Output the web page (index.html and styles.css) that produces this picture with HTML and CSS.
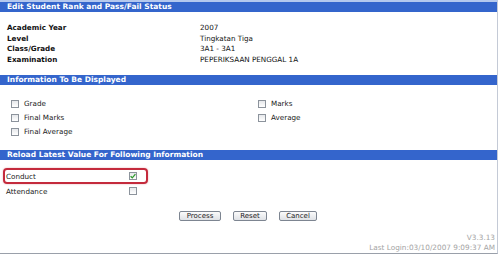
FILE: index.html
```html
<!DOCTYPE html>
<html lang="en">

<head>
  <meta charset="UTF-8" />
  <title>Edit Student Rank and Pass/Fail Status</title>
  <link rel="stylesheet" href="styles.css">
</head>

<body>
  <div class="panel">
    <div class="section-head">Edit Student Rank and Pass/Fail Status</div>
    <div class="info-list">
      <div class="info-row"><span class="info-label">Academic Year</span><span>2007</span></div>
      <div class="info-row"><span class="info-label">Level</span><span>Tingkatan Tiga</span></div>
      <div class="info-row"><span class="info-label">Class/Grade</span><span>3A1 - 3A1</span></div>
      <div class="info-row"><span class="info-label">Examination</span><span>PEPERIKSAAN PENGGAL 1A</span></div>
    </div>

    <div class="section-head">Information To Be Displayed</div>
    <div class="option-grid">
      <label class="option"><span class="check"></span>Grade</label>
      <label class="option"><span class="check"></span>Marks</label>
      <label class="option"><span class="check"></span>Final Marks</label>
      <label class="option"><span class="check"></span>Average</label>
      <label class="option"><span class="check"></span>Final Average</label>
    </div>

    <div class="section-head">Reload Latest Value For Following Information</div>
    <div class="reload-list">
      <!-- highlighted row -->
      <div class="reload-row highlight">
        <span class="reload-label">Conduct</span>
        <span class="check checked">
          <svg viewBox="0 0 8 8" width="8" height="8"><path d="M1.6 4.2 L3.3 5.8 L6.4 2.2" fill="none" stroke="#2f9a2f" stroke-width="1.3"/></svg>
        </span>
      </div>
      <div class="reload-row">
        <span class="reload-label">Attendance</span>
        <span class="check"></span>
      </div>
    </div>

    <div class="button-row">
      <button class="btn">Process</button>
      <button class="btn">Reset</button>
      <button class="btn">Cancel</button>
    </div>

    <footer>
      <div>V3.3.13</div>
      <div>Last Login:03/10/2007 9:09:37 AM</div>
    </footer>
  </div>
</body>

</html>
```

FILE: styles.css
```css
* {
  margin: 0;
  padding: 0;
  box-sizing: border-box;
}

body {
  background: #ffffff;
  font-family: "DejaVu Sans", Verdana, sans-serif;
  font-size: 7.2px;
  color: #111111;
}

.panel {
  width: 498px;
  height: 254px;
  border-top: 2px solid #b4c8ee;
  border-right: 1px solid #c4cad6;
  border-bottom: 1px solid #9aa0aa;
  display: flex;
  flex-direction: column;
}

.section-head {
  height: 10px;
  line-height: 10px;
  background: #3465cc;
  color: #ffffff;
  font-size: 7.5px;
  font-weight: bold;
  padding-left: 7px;
  white-space: nowrap;
}

.info-list {
  padding: 11px 0 10px 7px;
}

.info-row {
  display: flex;
  height: 10.6px;
  line-height: 10.6px;
}

.info-label {
  width: 193px;
  font-weight: bold;
}

.option-grid {
  display: grid;
  grid-template-columns: 247px 1fr;
  grid-auto-rows: 14px;
  padding: 11.5px 0 11.5px 11px;
  color: #222222;
}

.option {
  display: flex;
  align-items: center;
  gap: 5px;
}

.check {
  width: 8px;
  height: 8px;
  border: 1px solid #8c939c;
  background: linear-gradient(#e6e8eb, #ffffff);
  display: inline-flex;
}

.check svg {
  display: block;
  margin: -1px;
}

.reload-list {
  padding-top: 8px;
}

.reload-row {
  display: flex;
  align-items: center;
  height: 14px;
  padding-left: 6px;
  color: #222222;
}

.reload-label {
  width: 123px;
}

.reload-row.highlight {
  height: 16px;
  width: 145px;
  margin-left: 3px;
  padding-left: 1px;
  border: 2px solid #c42a3c;
  border-radius: 4px;
  box-shadow: 0 0 2px rgba(196, 42, 60, 0.4);
}

.button-row {
  display: flex;
  justify-content: center;
  gap: 12px;
  margin-top: 13px;
  padding-right: 1px;
}

.btn {
  font-family: "DejaVu Sans", Verdana, sans-serif;
  font-size: 7px;
  height: 10px;
  line-height: 8px;
  padding: 0 5px;
  border: 1px solid #7d8591;
  border-radius: 2px;
  background: linear-gradient(#fbfbfb, #dfe2e6);
  color: #222222;
}

.btn:nth-child(1) { width: 42px; }
.btn:nth-child(2) { width: 34px; }
.btn:nth-child(3) { width: 38px; }

footer {
  margin-top: auto;
  text-align: right;
  padding-right: 2px;
  color: #a4a4a4;
  font-size: 7.3px;
  line-height: 10px;
}
```
